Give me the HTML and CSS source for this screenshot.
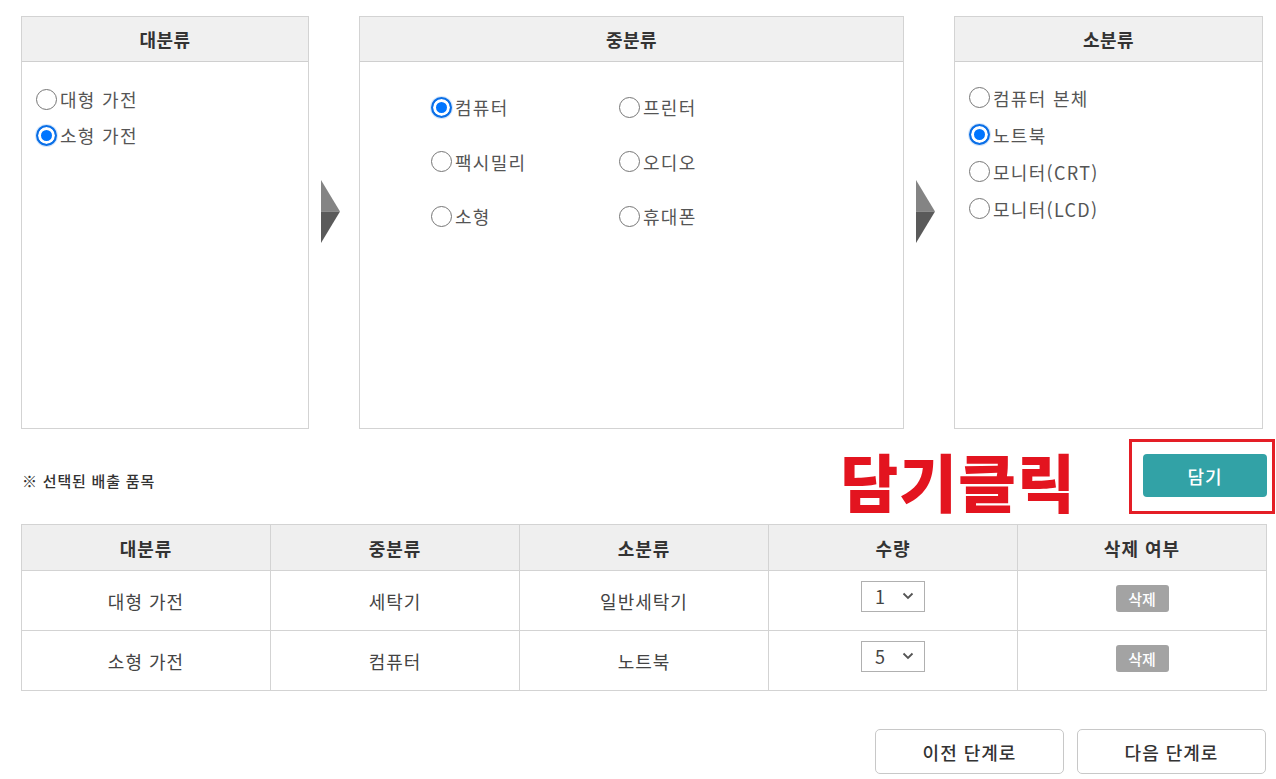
FILE: index.html
```html
<!DOCTYPE html>
<html lang="ko">
<head>
<meta charset="utf-8">
<title>배출 품목 선택</title>
<link rel="stylesheet" href="styles.css">
</head>
<body>
<div class="page">
  <div class="pickers">
    <section class="panel panel-large">
      <h2 class="panel-head">대분류</h2>
      <div class="panel-body list">
        <label class="opt"><span class="radio"></span>대형 가전</label>
        <label class="opt"><span class="radio checked"></span>소형 가전</label>
      </div>
    </section>
    <div class="arrow-col">
      <svg class="arrow" width="19" height="63" viewBox="0 0 19 63"><polygon points="0,0 19,31.5 0,31.5" fill="#848484"/><polygon points="0,31.5 19,31.5 0,63" fill="#5a5a5a"/></svg>
    </div>
    <section class="panel panel-mid">
      <h2 class="panel-head">중분류</h2>
      <div class="panel-body grid">
        <label class="opt"><span class="radio checked"></span>컴퓨터</label>
        <label class="opt"><span class="radio"></span>프린터</label>
        <label class="opt"><span class="radio"></span>팩시밀리</label>
        <label class="opt"><span class="radio"></span>오디오</label>
        <label class="opt"><span class="radio"></span>소형</label>
        <label class="opt"><span class="radio"></span>휴대폰</label>
      </div>
    </section>
    <div class="arrow-col">
      <svg class="arrow" width="19" height="63" viewBox="0 0 19 63"><polygon points="0,0 19,31.5 0,31.5" fill="#848484"/><polygon points="0,31.5 19,31.5 0,63" fill="#5a5a5a"/></svg>
    </div>
    <section class="panel panel-small">
      <h2 class="panel-head">소분류</h2>
      <div class="panel-body list list-small">
        <label class="opt"><span class="radio"></span>컴퓨터 본체</label>
        <label class="opt"><span class="radio checked"></span>노트북</label>
        <label class="opt"><span class="radio"></span>모니터(CRT)</label>
        <label class="opt"><span class="radio"></span>모니터(LCD)</label>
      </div>
    </section>
  </div>

  <div class="action-row">
    <p class="selected-label">※ 선택된 배출 품목</p>
    <div class="action-right">
      <span class="callout">담기클릭</span>
      <div class="callout-box"><button class="btn-add">담기</button></div>
    </div>
  </div>

  <table class="items">
    <thead>
      <tr><th>대분류</th><th>중분류</th><th>소분류</th><th>수량</th><th>삭제 여부</th></tr>
    </thead>
    <tbody>
      <tr>
        <td>대형 가전</td><td>세탁기</td><td>일반세탁기</td>
        <td><div class="select"><span>1</span><svg width="12" height="8" viewBox="0 0 12 8"><path d="M1.5 1.5 L6 6 L10.5 1.5" fill="none" stroke="#555" stroke-width="1.8"/></svg></div></td>
        <td><button class="btn-del">삭제</button></td>
      </tr>
      <tr>
        <td>소형 가전</td><td>컴퓨터</td><td>노트북</td>
        <td><div class="select"><span>5</span><svg width="12" height="8" viewBox="0 0 12 8"><path d="M1.5 1.5 L6 6 L10.5 1.5" fill="none" stroke="#555" stroke-width="1.8"/></svg></div></td>
        <td><button class="btn-del">삭제</button></td>
      </tr>
    </tbody>
  </table>

  <div class="nav-row">
    <button class="btn-nav">이전 단계로</button>
    <button class="btn-nav">다음 단계로</button>
  </div>
</div>
</body>
</html>
```

FILE: styles.css
```css
* { box-sizing: border-box; }
html, body { margin: 0; padding: 0; background: #fff; }
body {
  font-family: "Noto Sans CJK KR", "Noto Sans", sans-serif;
  color: #444;
  width: 1276px;
  overflow: hidden;
}
.page { padding: 16px 10px 0 21px; }

.pickers { display: flex; height: 413px; }
.panel {
  border: 1px solid #d3d3d3;
  background: #fff;
  display: flex;
  flex-direction: column;
}
.panel-large { width: 288px; }
.panel-mid { width: 545px; }
.panel-small { width: 309px; }
.panel-head {
  margin: 0;
  height: 45px;
  line-height: 45px;
  background: #f0f0f0;
  border-bottom: 1px solid #cfcfcf;
  text-align: center;
  font-size: 18px;
  font-weight: 700;
  color: #333;
  letter-spacing: 0.5px;
}
.arrow-col {
  width: 50px;
  flex: none;
  display: flex;
  align-items: center;
  padding: 0 0 23px 12px;
}
.arrow { display: block; }

.panel-body { flex: 1; }
.list { padding: 19px 0 0 14px; display: flex; flex-direction: column; }
.list .opt { height: 36px; }
.list-small { padding-top: 17px; }
.list-small .opt { height: 37px; }
.grid {
  padding: 18px 0 0 71px;
  display: grid;
  grid-template-columns: 188px 188px;
  grid-auto-rows: 54.5px;
  align-content: start;
}
.opt {
  display: flex;
  align-items: center;
  font-size: 18px;
  color: #555;
  white-space: nowrap;
  letter-spacing: 1.3px;
}
.radio {
  width: 21px;
  height: 21px;
  border-radius: 50%;
  border: 1.5px solid #767676;
  margin-right: 3px;
  flex: none;
  background: #fff;
}
.radio.checked {
  border: 2px solid #0b6fe6;
  background: #0075ff;
  box-shadow: inset 0 0 0 3px #fff, 0 0 0 1px #d8e8fb;
}

.action-row {
  height: 95px;
  display: flex;
  align-items: center;
  justify-content: space-between;
}
.selected-label {
  margin: 8px 0 0 1px;
  font-size: 15px;
  font-weight: 500;
  color: #333;
  letter-spacing: 0.8px;
}
.action-right {
  display: flex;
  align-items: center;
  margin-right: -9px;
  margin-top: 0;
}
.callout {
  font-size: 63px;
  font-weight: 900;
  color: #e3141f;
  line-height: 1;
  letter-spacing: 1px;
  margin-right: 53px;
  margin-top: 6px;
}
.callout-box {
  border: 3px solid #e41e26;
  padding: 12px 5px 14px 11px;
}
.btn-add {
  display: block;
  width: 124px;
  height: 43px;
  border: 0;
  border-radius: 4px;
  background: #32a2a6;
  color: #fff;
  font-family: inherit;
  font-size: 18px;
  font-weight: 500;
  letter-spacing: 1px;
}

.items {
  width: 1246px;
  border-collapse: collapse;
  table-layout: fixed;
}
.items th, .items td {
  border: 1px solid #d3d3d3;
  text-align: center;
  font-size: 18px;
  letter-spacing: 1px;
}
.items th {
  height: 46px;
  background: #efefef;
  font-weight: 700;
  color: #333;
}
.items td { height: 60px; color: #444; }
.select {
  display: inline-flex;
  align-items: center;
  justify-content: space-between;
  width: 64px;
  height: 31px;
  border: 1px solid #b0b0b0;
  padding: 0 10px 0 13px;
  vertical-align: middle;
  font-size: 18px;
  color: #444;
  margin-bottom: 9px;
}
.btn-del {
  width: 53px;
  height: 27px;
  border: 0;
  border-radius: 3px;
  background: #a3a3a3;
  color: #fff;
  font-family: inherit;
  font-size: 15px;
  font-weight: 500;
  padding: 0;
  vertical-align: middle;
  margin-bottom: 4px;
}

.nav-row {
  display: flex;
  justify-content: flex-end;
  gap: 13px;
  margin-top: 38px;
}
.btn-nav {
  width: 189px;
  height: 45px;
  border: 1px solid #c8c8c8;
  border-radius: 5px;
  background: #fff;
  font-family: inherit;
  font-size: 18px;
  font-weight: 500;
  color: #333;
  letter-spacing: 1px;
}
```
